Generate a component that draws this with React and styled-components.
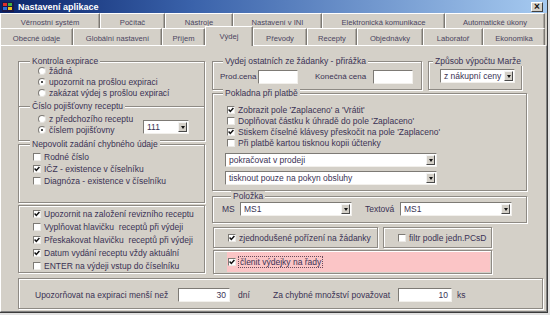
import React from "react";
import styled, { createGlobalStyle } from "styled-components";

const FACE = "#d4d0c8";
const INK = "#3a3254";

const GlobalStyle = createGlobalStyle`
  html, body {
    margin: 0;
    padding: 0;
    background: #e2e2e2;
  }
  body {
    font-family: "Liberation Sans", Arial, sans-serif;
    font-size: 8.5px;
    color: ${INK};
  }
  * {
    box-sizing: border-box;
  }
`;

const topTabs = [
  { label: "Věrnostní systém", w: 100 },
  { label: "Počítač", w: 65 },
  { label: "Nástroje", w: 68 },
  { label: "Nastavení v INI", w: 89 },
  { label: "Elektronická komunikace", w: 123 },
  { label: "Automatické úkony", w: 100 },
];

const bottomTabs = [
  { label: "Obecné údaje", w: 73 },
  { label: "Globální nastavení", w: 89 },
  { label: "Příjem", w: 43 },
  { label: "Výdej", w: 48, active: true },
  { label: "Převody", w: 54 },
  { label: "Recepty", w: 50 },
  { label: "Objednávky", w: 66 },
  { label: "Laboratoř", w: 60 },
  { label: "Ekonomika", w: 62 },
];

function AppIcon() {
  return (
    <svg width="12" height="10" viewBox="0 0 12 10">
      <rect x="0" y="0" width="12" height="10" fill="#1a1a4a" />
      <rect x="1" y="1" width="4" height="3" fill="#e0302a" />
      <rect x="6" y="1" width="4" height="3" fill="#3cb043" />
      <rect x="1" y="5" width="4" height="3" fill="#2f6fd8" />
      <rect x="6" y="5" width="4" height="3" fill="#f2c21a" />
    </svg>
  );
}

function Radio({ checked, children }) {
  return (
    <OptionRow>
      <RadioMark $on={checked} />
      {children}
    </OptionRow>
  );
}

function Check({ checked, children, $h }) {
  return (
    <OptionRow $h={$h}>
      <CheckFrame>
        {checked && (
          <svg width="6" height="6" viewBox="0 0 6 6">
            <path d="M0.6 2.6 L2.3 4.4 L5.4 0.9" stroke="#111" strokeWidth="1.5" fill="none" />
          </svg>
        )}
      </CheckFrame>
      {children}
    </OptionRow>
  );
}

function Select({ w, children }) {
  return (
    <SelectBox $w={w}>
      <SelectText>{children}</SelectText>
      <DropButton />
    </SelectBox>
  );
}

export default function App() {
  return (
    <>
      <GlobalStyle />
      <Window>
        <TitleBar>
          <AppIcon />
          <Title>Nastavení aplikace</Title>
          <CloseButton>×</CloseButton>
        </TitleBar>

        <TabRow $h={15}>
          {topTabs.map((t) => (
            <Tab key={t.label} $w={t.w}>
              {t.label}
            </Tab>
          ))}
        </TabRow>
        <TabRow $h={17}>
          {bottomTabs.map((t) => (
            <Tab key={t.label} $w={t.w} $active={t.active}>
              {t.label}
            </Tab>
          ))}
        </TabRow>

        <Panel>
          <Columns>
            <LeftColumn>
              <ExpiryGroup>
                <Legend $x={11}>Kontrola expirace</Legend>
                <Radio>žádná</Radio>
                <Radio checked>upozornit na prošlou expiraci</Radio>
                <Radio>zakázat výdej s prošlou expirací</Radio>
              </ExpiryGroup>

              <InsurerGroup>
                <Legend $x={11}>Číslo pojišťovny receptu</Legend>
                <OptionColumn>
                  <Radio>z předchozího receptu</Radio>
                  <Radio checked>číslem pojišťovny</Radio>
                </OptionColumn>
                <InsurerSelect>
                  <Select w={46}>111</Select>
                </InsurerSelect>
              </InsurerGroup>

              <ValidationGroup>
                <Legend $x={11}>Nepovolit zadání chybného údaje</Legend>
                <Check $h={12}>Rodné číslo</Check>
                <Check $h={12} checked>
                  IČZ - existence v číselníku
                </Check>
                <Check $h={12}>Diagnóza - existence v číselníku</Check>
              </ValidationGroup>

              <AlertGroup>
                <Check $h={13} checked>
                  Upozornit na založení revizního receptu
                </Check>
                <Check $h={13}>Vyplňovat hlavičku&nbsp; receptů při výdeji</Check>
                <Check $h={13} checked>
                  Přeskakovat hlavičku&nbsp; receptů při výdeji
                </Check>
                <Check $h={13} checked>
                  Datum vydání receptu vždy aktuální
                </Check>
                <Check $h={13}>ENTER na výdeji vstup do číselníku</Check>
              </AlertGroup>
            </LeftColumn>

            <RightColumn>
              <TopRow>
                <MarkupGroup>
                  <Legend $x={10}>Vydej ostatních ze žádanky - přirážka</Legend>
                  <CompactLabel $w={38}>Prod.cena</CompactLabel>
                  <TextField $w={40} />
                  <CompactLabel $w={58} $ml={17}>
                    Konečná cena
                  </CompactLabel>
                  <TextField $w={40} />
                </MarkupGroup>
                <MarginGroup>
                  <Legend $x={4}>Způsob výpočtu Marže</Legend>
                  <Select w={75}>z nákupní ceny</Select>
                </MarginGroup>
              </TopRow>

              <PaymentGroup>
                <Legend $x={10}>Pokladna při platbě</Legend>
                <Check checked>Zobrazit pole 'Zaplaceno' a 'Vrátit'</Check>
                <Check>Doplňovat částku k úhradě do pole 'Zaplaceno'</Check>
                <Check checked>Stiskem číselné klávesy přeskočit na pole 'Zaplaceno'</Check>
                <Check>Při platbě kartou tisknou kopii účtenky</Check>
                <PaymentSelects>
                  <Select w={212}>pokračovat v prodeji</Select>
                  <Select w={212}>tisknout pouze na pokyn obsluhy</Select>
                </PaymentSelects>
              </PaymentGroup>

              <ItemGroup>
                <Legend $x={18}>Položka</Legend>
                <FieldLabel $w={18}>MS</FieldLabel>
                <Select w={112}>MS1</Select>
                <FieldLabel $w={35} $ml={13}>
                  Textová
                </FieldLabel>
                <Select w={112}>MS1</Select>
              </ItemGroup>

              <FlagRow>
                <FlagBox $w={165}>
                  <Check checked>zjednodušené pořízení na žádanky</Check>
                </FlagBox>
                <FlagBox $w={109}>
                  <Check>filtr podle jedn.PCsD</Check>
                </FlagBox>
              </FlagRow>

              <HighlightGroup>
                <HighlightStrip>
                  <Check checked>
                    <FocusText>členit výdejky na řady</FocusText>
                  </Check>
                </HighlightStrip>
              </HighlightGroup>
            </RightColumn>
          </Columns>

          <LimitsGroup>
            <FieldLabel $w={143}>Upozorňovat na expiraci menší než</FieldLabel>
            <TextField $w={52} $right>
              30
            </TextField>
            <FieldLabel $w={35} $ml={8}>
              dní
            </FieldLabel>
            <FieldLabel $w={125}>Za chybné množství považovat</FieldLabel>
            <TextField $w={54} $right>
              10
            </TextField>
            <FieldLabel $ml={5}>ks</FieldLabel>
          </LimitsGroup>
        </Panel>
      </Window>
    </>
  );
}

const Window = styled.div`
  width: 548px;
  height: 313px;
  background: ${FACE};
  border-right: 1px solid #3c3c3c;
  border-bottom: 1px solid #3c3c3c;
  display: flex;
  flex-direction: column;
  overflow: hidden;
`;

const TitleBar = styled.div`
  height: 13px;
  flex: none;
  display: flex;
  align-items: center;
  gap: 4px;
  padding: 0 2px 0 2px;
  background: linear-gradient(90deg, #0a246a 0%, #3a62aa 35%, #a6caf0 100%);
`;

const Title = styled.span`
  color: #fff;
  font-weight: bold;
  font-size: 9px;
  white-space: nowrap;
`;

const CloseButton = styled.span`
  margin-left: auto;
  margin-right: 2px;
  width: 12px;
  height: 10px;
  background: ${FACE};
  border: 1px solid;
  border-color: #fff #404040 #404040 #fff;
  display: flex;
  align-items: center;
  justify-content: center;
  font-size: 10px;
  font-weight: bold;
  line-height: 8px;
  color: #111;
`;

const TabRow = styled.div`
  height: ${(p) => p.$h}px;
  flex: none;
  display: flex;
`;

const Tab = styled.div`
  width: ${(p) => p.$w}px;
  flex: none;
  height: ${(p) => (p.$active ? "calc(100% + 3px)" : "100%")};
  margin-top: ${(p) => (p.$active ? -2 : 0)}px;
  position: relative;
  z-index: ${(p) => (p.$active ? 1 : 0)};
  background: ${FACE};
  border-top: 1px solid #fff;
  border-left: 1px solid #fff;
  border-right: 1px solid #7c7973;
  box-shadow: inset -1px 0 0 #aaa69f;
  display: flex;
  align-items: center;
  justify-content: center;
  padding-top: ${(p) => (p.$active ? 0 : 2)}px;
  font-size: 7.6px;
  color: #4a4560;
  white-space: nowrap;
`;

const Panel = styled.div`
  flex: 1;
  border-top: 1px solid #fff;
  border-left: 1px solid #fff;
  border-right: 1px solid #808080;
  border-bottom: 1px solid #808080;
  padding: 15px 0 0 17px;
  display: flex;
  flex-direction: column;
`;

const Columns = styled.div`
  display: flex;
  gap: 7px;
  align-items: flex-start;
`;

const LeftColumn = styled.div`
  width: 187px;
  display: flex;
  flex-direction: column;
`;

const RightColumn = styled.div`
  width: 315px;
  display: flex;
  flex-direction: column;
`;

const Group = styled.div`
  position: relative;
  flex: none;
  border: 1px solid #8e8a84;
  box-shadow: inset 1px 1px 0 #fff, 1px 1px 0 #fff;
`;

const Legend = styled.span`
  position: absolute;
  top: -6px;
  left: ${(p) => p.$x}px;
  padding: 0 2px;
  line-height: 10px;
  background: ${FACE};
  white-space: nowrap;
`;

const ExpiryGroup = styled(Group)`
  height: 46px;
  padding: 3px 0 0 19px;
`;

const InsurerGroup = styled(Group)`
  height: 35px;
  margin-top: -1px;
  padding: 6px 0 0 19px;
  display: flex;
`;

const OptionColumn = styled.div`
  display: flex;
  flex-direction: column;
`;

const InsurerSelect = styled.div`
  margin: 7px 15px 0 auto;
`;

const ValidationGroup = styled(Group)`
  height: 59px;
  margin-top: 3px;
  padding: 6px 0 0 14px;
`;

const AlertGroup = styled(Group)`
  height: 68px;
  margin-top: 2px;
  padding: 1px 0 0 14px;
`;

const TopRow = styled.div`
  display: flex;
  gap: 6px;
`;

const MarkupGroup = styled(Group)`
  width: 210px;
  height: 29px;
  padding: 8px 0 0 7px;
  display: flex;
  align-items: flex-start;
`;

const MarginGroup = styled(Group)`
  width: 94px;
  height: 29px;
  padding: 7px 0 0 11px;
`;

const PaymentGroup = styled(Group)`
  height: 98px;
  margin-top: 3px;
  padding: 10px 0 0 14px;
`;

const PaymentSelects = styled.div`
  margin: 5px 0 0 -2px;
  display: flex;
  flex-direction: column;
  gap: 4px;
`;

const ItemGroup = styled(Group)`
  height: 27px;
  margin-top: 5px;
  padding: 5px 0 0 9px;
  display: flex;
  align-items: flex-start;
`;

const FlagRow = styled.div`
  display: flex;
  gap: 5px;
  margin-top: 4px;
  margin-left: 1px;
`;

const FlagBox = styled(Group)`
  width: ${(p) => p.$w}px;
  height: 21px;
  padding-left: 14px;
  display: flex;
  align-items: center;
`;

const HighlightGroup = styled(Group)`
  width: 279px;
  height: 24px;
  margin: 2px 0 0 1px;
  padding: 1px 1px 0 13px;
`;

const HighlightStrip = styled.div`
  height: 20px;
  background: #fbc5c6;
  display: flex;
  align-items: center;
  padding-left: 1px;
`;

const FocusText = styled.span`
  outline: 1px dotted #6a4a5a;
  outline-offset: 0;
  line-height: 10px;
  padding: 0 1px;
`;

const LimitsGroup = styled(Group)`
  width: 525px;
  height: 31px;
  margin-top: 4px;
  padding: 3px 0 0 16px;
  display: flex;
  align-items: center;
`;

const OptionRow = styled.div`
  display: flex;
  align-items: center;
  gap: 3px;
  height: ${(p) => p.$h || 11}px;
  white-space: nowrap;
`;

const RadioMark = styled.span`
  flex: none;
  width: 8px;
  height: 8px;
  border-radius: 50%;
  background: #fff;
  border: 1px solid;
  border-color: #7d7a75 #e4e2de #e4e2de #7d7a75;
  display: flex;
  align-items: center;
  justify-content: center;

  &::after {
    content: "";
    display: ${(p) => (p.$on ? "block" : "none")};
    width: 2px;
    height: 2px;
    border-radius: 50%;
    background: #111;
  }
`;

const CheckFrame = styled.span`
  flex: none;
  width: 8px;
  height: 8px;
  background: #fff;
  border: 1px solid;
  border-color: #7d7a75 #eceae6 #eceae6 #7d7a75;
  display: flex;
  align-items: center;
  justify-content: center;
`;

const SelectBox = styled.div`
  width: ${(p) => p.$w}px;
  height: 14px;
  flex: none;
  background: #fff;
  border: 1px solid;
  border-color: #7d7a75 #f2f0ec #f2f0ec #7d7a75;
  display: flex;
  align-items: stretch;
`;

const SelectText = styled.span`
  flex: 1;
  padding-left: 3px;
  line-height: 12px;
  white-space: nowrap;
  overflow: hidden;
`;

const DropButton = styled.span`
  width: 9px;
  margin: 1px;
  flex: none;
  background: ${FACE};
  border: 1px solid;
  border-color: #f4f4f4 #4a4a4a #4a4a4a #f4f4f4;
  display: flex;
  align-items: center;
  justify-content: center;

  &::after {
    content: "";
    border-left: 2px solid transparent;
    border-right: 2px solid transparent;
    border-top: 3px solid #111;
  }
`;

const FieldLabel = styled.span`
  flex: none;
  width: ${(p) => (p.$w ? `${p.$w}px` : "auto")};
  margin-left: ${(p) => p.$ml || 0}px;
  line-height: 14px;
  white-space: nowrap;
`;

const CompactLabel = styled(FieldLabel)`
  font-size: 8px;
`;

const TextField = styled.div`
  width: ${(p) => p.$w}px;
  height: 14px;
  flex: none;
  background: #fff;
  border: 1px solid;
  border-color: #7d7a75 #f2f0ec #f2f0ec #7d7a75;
  text-align: ${(p) => (p.$right ? "right" : "left")};
  padding: 0 3px;
  line-height: 12px;
`;
